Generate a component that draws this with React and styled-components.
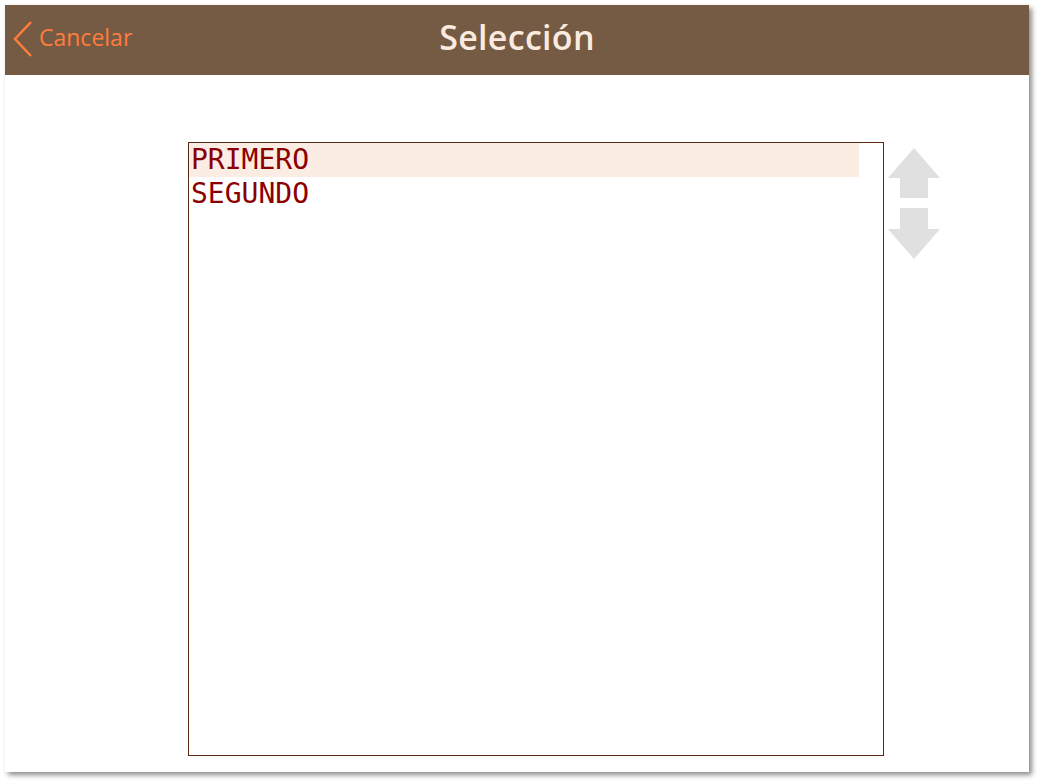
import React, { useState } from "react";
import styled, { createGlobalStyle } from "styled-components";

const GlobalStyle = createGlobalStyle`
  html, body {
    margin: 0;
    padding: 0;
    background: #ffffff;
  }
  body {
    min-height: 782px;
  }
`;

const Window = styled.div`
  margin: 5px 0 0 5px;
  width: 1024px;
  height: 767px;
  background: #ffffff;
  box-shadow: 3px 3px 5px rgba(0, 0, 0, 0.45);
  display: flex;
  flex-direction: column;
`;

const Header = styled.div`
  height: 70px;
  box-sizing: border-box;
  padding-bottom: 6px;
  background: #755b44;
  display: flex;
  align-items: center;
  justify-content: center;
  position: relative;
  font-family: "Open Sans", "Noto Sans", sans-serif;
`;

const BackButton = styled.button`
  position: absolute;
  left: 7px;
  top: 0;
  bottom: 0;
  display: flex;
  align-items: center;
  gap: 5px;
  background: none;
  border: none;
  padding: 0 0 3px 0;
  color: #ff7c3c;
  font-family: "Open Sans", "Noto Sans", sans-serif;
  font-size: 23px;
  cursor: pointer;
`;

const BackLabel = styled.span`
  position: relative;
  top: -2px;
`;

const Title = styled.h1`
  margin: 0;
  color: #fbeadf;
  font-size: 34px;
  font-weight: 600;
  letter-spacing: 0.3px;
`;

const Body = styled.div`
  flex: 1;
  display: flex;
  align-items: flex-start;
  padding: 67px 0 0 183px;
  gap: 4px;
`;

const ListBox = styled.div`
  width: 694px;
  height: 612px;
  border: 1px solid #5a2a12;
  background: #ffffff;
`;

const Row = styled.div`
  height: 34px;
  line-height: 34px;
  padding-left: 2px;
  font-family: "DejaVu Sans Mono", monospace;
  font-size: 28px;
  color: #8b0000;
  width: 668px;
  background: ${(p) => (p.$selected ? "#fbede4" : "transparent")};
  cursor: default;
`;

const Arrows = styled.div`
  display: flex;
  flex-direction: column;
  gap: 9px;
  padding-top: 6px;
`;

const ArrowButton = styled.div`
  width: 52px;
  height: 51px;
  display: flex;
`;

function UpArrow() {
  return (
    <svg width="52" height="51" viewBox="0 0 52 51">
      <path d="M26 0 L52 30 L40 30 L40 50 L12 50 L12 30 L0 30 Z" fill="#e0e0e0" />
    </svg>
  );
}

function DownArrow() {
  return (
    <svg width="52" height="51" viewBox="0 0 52 51">
      <path d="M12 0 L40 0 L40 21 L52 21 L26 51 L0 21 L12 21 Z" fill="#e0e0e0" />
    </svg>
  );
}

export default function App() {
  const [items] = useState(["PRIMERO", "SEGUNDO"]);
  const [selected, setSelected] = useState(0);

  return (
    <>
      <GlobalStyle />
      <Window>
        <Header>
          <BackButton>
            <svg width="22" height="38" viewBox="0 0 22 38">
              <path d="M19 2 L3 19 L19 36" fill="none" stroke="#ff7c3c" strokeWidth="2.5" />
            </svg>
            <BackLabel>Cancelar</BackLabel>
          </BackButton>
          <Title>Selección</Title>
        </Header>
        <Body>
          <ListBox>
            {items.map((item, i) => (
              <Row key={item} $selected={i === selected} onClick={() => setSelected(i)}>
                {item}
              </Row>
            ))}
          </ListBox>
          <Arrows>
            <ArrowButton>
              <UpArrow />
            </ArrowButton>
            <ArrowButton>
              <DownArrow />
            </ArrowButton>
          </Arrows>
        </Body>
      </Window>
    </>
  );
}
